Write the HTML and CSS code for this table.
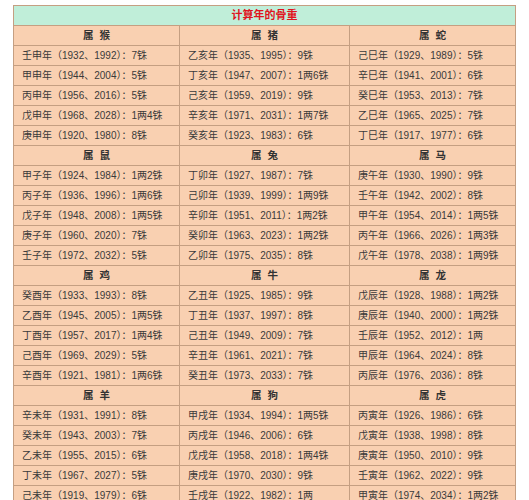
FILE: index.html
```html
<!DOCTYPE html>
<html lang="zh">
<head>
<meta charset="utf-8">
<title>计算年的骨重</title>
<link rel="stylesheet" href="styles.css">
</head>
<body>
<table class="bone">
  <colgroup><col class="c1"><col class="c2"><col class="c3"></colgroup>
  <tr><td class="title" colspan="3">计算年的骨重</td></tr>

  <tr class="head"><td>属 猴</td><td>属 猪</td><td>属 蛇</td></tr>
  <tr><td>壬申年（1932、1992）：7铢</td><td>乙亥年（1935、1995）：9铢</td><td>己巳年（1929、1989）：5铢</td></tr>
  <tr><td>甲申年（1944、2004）：5铢</td><td>丁亥年（1947、2007）：1两6铢</td><td>辛巳年（1941、2001）：6铢</td></tr>
  <tr><td>丙申年（1956、2016）：5铢</td><td>己亥年（1959、2019）：9铢</td><td>癸巳年（1953、2013）：7铢</td></tr>
  <tr><td>戊申年（1968、2028）：1两4铢</td><td>辛亥年（1971、2031）：1两7铢</td><td>乙巳年（1965、2025）：7铢</td></tr>
  <tr><td>庚申年（1920、1980）：8铢</td><td>癸亥年（1923、1983）：6铢</td><td>丁巳年（1917、1977）：6铢</td></tr>

  <tr class="head"><td>属 鼠</td><td>属 兔</td><td>属 马</td></tr>
  <tr><td>甲子年（1924、1984）：1两2铢</td><td>丁卯年（1927、1987）：7铢</td><td>庚午年（1930、1990）：9铢</td></tr>
  <tr><td>丙子年（1936、1996）：1两6铢</td><td>己卯年（1939、1999）：1两9铢</td><td>壬午年（1942、2002）：8铢</td></tr>
  <tr><td>戊子年（1948、2008）：1两5铢</td><td>辛卯年（1951、2011）：1两2铢</td><td>甲午年（1954、2014）：1两5铢</td></tr>
  <tr><td>庚子年（1960、2020）：7铢</td><td>癸卯年（1963、2023）：1两2铢</td><td>丙午年（1966、2026）：1两3铢</td></tr>
  <tr><td>壬子年（1972、2032）：5铢</td><td>乙卯年（1975、2035）：8铢</td><td>戊午年（1978、2038）：1两9铢</td></tr>

  <tr class="head"><td>属 鸡</td><td>属 牛</td><td>属 龙</td></tr>
  <tr><td>癸酉年（1933、1993）：8铢</td><td>乙丑年（1925、1985）：9铢</td><td>戊辰年（1928、1988）：1两2铢</td></tr>
  <tr><td>乙酉年（1945、2005）：1两5铢</td><td>丁丑年（1937、1997）：8铢</td><td>庚辰年（1940、2000）：1两2铢</td></tr>
  <tr><td>丁酉年（1957、2017）：1两4铢</td><td>己丑年（1949、2009）：7铢</td><td>壬辰年（1952、2012）：1两</td></tr>
  <tr><td>己酉年（1969、2029）：5铢</td><td>辛丑年（1961、2021）：7铢</td><td>甲辰年（1964、2024）：8铢</td></tr>
  <tr><td>辛酉年（1921、1981）：1两6铢</td><td>癸丑年（1973、2033）：7铢</td><td>丙辰年（1976、2036）：8铢</td></tr>

  <tr class="head"><td>属 羊</td><td>属 狗</td><td>属 虎</td></tr>
  <tr><td>辛未年（1931、1991）：8铢</td><td>甲戌年（1934、1994）：1两5铢</td><td>丙寅年（1926、1986）：6铢</td></tr>
  <tr><td>癸未年（1943、2003）：7铢</td><td>丙戌年（1946、2006）：6铢</td><td>戊寅年（1938、1998）：8铢</td></tr>
  <tr><td>乙未年（1955、2015）：6铢</td><td>戊戌年（1958、2018）：1两4铢</td><td>庚寅年（1950、2010）：9铢</td></tr>
  <tr><td>丁未年（1967、2027）：5铢</td><td>庚戌年（1970、2030）：9铢</td><td>壬寅年（1962、2022）：9铢</td></tr>
  <tr><td>己未年（1919、1979）：6铢</td><td>壬戌年（1922、1982）：1两</td><td>甲寅年（1974、2034）：1两2铢</td></tr>
</table>
</body>
</html>
```

FILE: styles.css
```css
html, body {
  margin: 0;
  padding: 0;
  background: #ffffff;
}

body {
  padding: 5px 0 0 13px;
  font-family: "Liberation Sans", "Noto Sans CJK SC", sans-serif;
  font-size: 10px;
  color: #3a3a3a;
}

.bone {
  border-collapse: collapse;
  width: 502px;
  table-layout: fixed;
}

.c1 { width: 166px; }
.c2 { width: 170px; }
.c3 { width: 166px; }

.bone td {
  height: 19px;
  padding: 0 0 0 8px;
  border: 1px solid #c59f82;
  background: #f9d0b1;
  line-height: 19px;
  white-space: nowrap;
  overflow: hidden;
  box-sizing: border-box;
}

.bone tr { height: 20px; }

.bone td.title {
  background: #c0eed9;
  color: #e0141e;
  font-weight: bold;
  font-size: 11px;
  text-align: center;
  padding: 0;
}

.bone .head td {
  text-align: center;
  font-weight: bold;
  font-size: 10.5px;
  word-spacing: 3px;
  color: #333333;
  padding: 0;
}
```
